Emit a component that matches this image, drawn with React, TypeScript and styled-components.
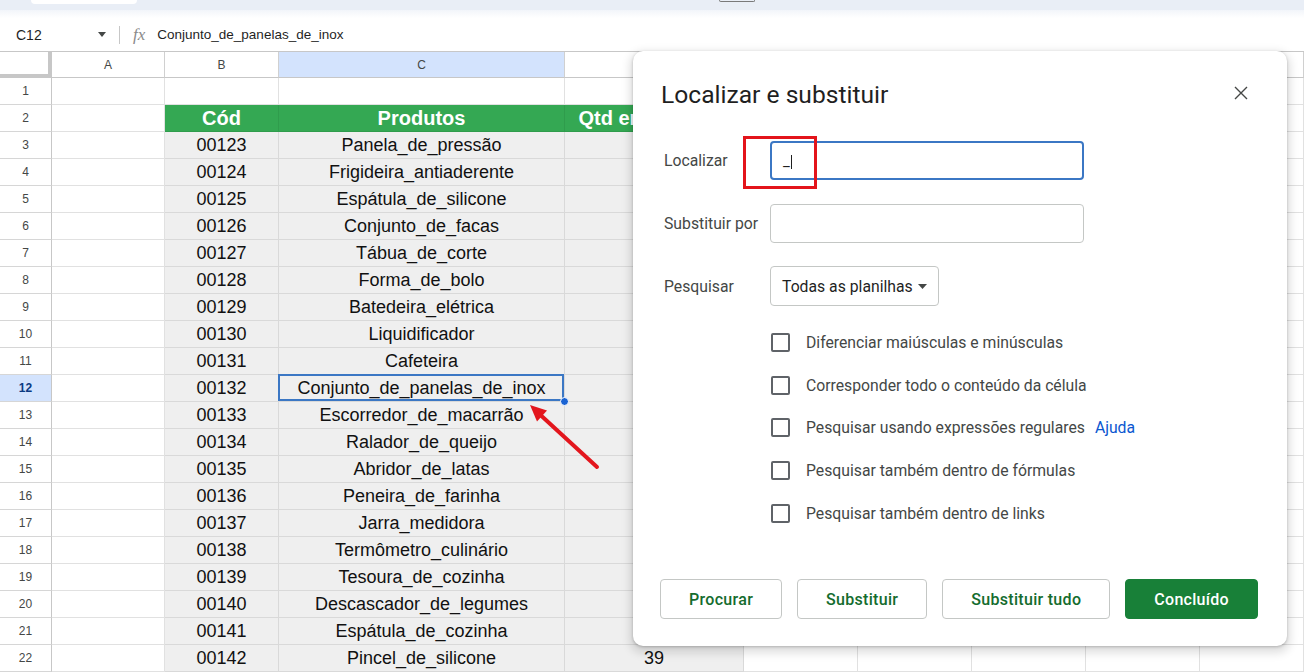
import React from 'react';
import styled, { createGlobalStyle, css } from 'styled-components';

// dados da planilha
const produtos: [string, string, number][] = [
  ['00123', 'Panela_de_pressão', 15],
  ['00124', 'Frigideira_antiaderente', 32],
  ['00125', 'Espátula_de_silicone', 58],
  ['00126', 'Conjunto_de_facas', 12],
  ['00127', 'Tábua_de_corte', 44],
  ['00128', 'Forma_de_bolo', 27],
  ['00129', 'Batedeira_elétrica', 9],
  ['00130', 'Liquidificador', 18],
  ['00131', 'Cafeteira', 21],
  ['00132', 'Conjunto_de_panelas_de_inox', 7],
  ['00133', 'Escorredor_de_macarrão', 36],
  ['00134', 'Ralador_de_queijo', 50],
  ['00135', 'Abridor_de_latas', 63],
  ['00136', 'Peneira_de_farinha', 41],
  ['00137', 'Jarra_medidora', 29],
  ['00138', 'Termômetro_culinário', 14],
  ['00139', 'Tesoura_de_cozinha', 33],
  ['00140', 'Descascador_de_legumes', 48],
  ['00141', 'Espátula_de_cozinha', 26],
  ['00142', 'Pincel_de_silicone', 39],
];

const columns = ['A', 'B', 'C', 'D', 'E', 'F', 'G', 'H', 'I'];
const colWidths = [113, 114, 286, 179, 114, 114, 114, 114, 104];
const headers = ['Cód', 'Produtos', 'Qtd em estoque'];

const opcoes = [
  'Diferenciar maiúsculas e minúsculas',
  'Corresponder todo o conteúdo da célula',
  'Pesquisar usando expressões regulares',
  'Pesquisar também dentro de fórmulas',
  'Pesquisar também dentro de links',
];

type CellKind = 'blank' | 'head' | 'data';

const cellFor = (row: number, col: number): { kind: CellKind; text: string } => {
  if (col < 1 || col > 3 || row < 2) return { kind: 'blank', text: '' };
  if (row === 2) return { kind: 'head', text: headers[col - 1] };
  const p = produtos[row - 3];
  return { kind: 'data', text: String(p[col - 1]) };
};

const App: React.FC = () => {
  const rows = Array.from({ length: 22 }, (_, i) => i + 1);

  return (
    <Page>
      <GlobalStyle />
      <TopStrip>
        <TabStub />
        <TinyButton />
      </TopStrip>
      <Fade />

      <FormulaBar>
        <NameBox>
          <span>C12</span>
          <svg width="8" height="5" viewBox="0 0 8 5">
            <path d="M0 0h8L4 5z" fill="#444746" />
          </svg>
        </NameBox>
        <Divider />
        <FxIcon>fx</FxIcon>
        <FormulaText>Conjunto_de_panelas_de_inox</FormulaText>
      </FormulaBar>

      <Grid>
        <CornerCell />
        {columns.map((c) => (
          <ColHeader key={c} $active={c === 'C'}>{c}</ColHeader>
        ))}
        {rows.map((r) => (
          <React.Fragment key={r}>
            <RowHeader $active={r === 12}>{r}</RowHeader>
            {columns.map((c, ci) => {
              const cell = cellFor(r, ci);
              const selected = r === 12 && c === 'C';
              return (
                <Cell key={c} $kind={cell.kind} $selected={selected}>
                  {cell.text}
                  {selected && <FillHandle />}
                </Cell>
              );
            })}
          </React.Fragment>
        ))}
      </Grid>

      <Arrow width="90" height="80" viewBox="0 0 90 80">
        <line x1="77" y1="72" x2="21" y2="20.5" stroke="#e3161d" strokeWidth="4" strokeLinecap="round" />
        <path d="M10 10L27 15.5L17 26.5z" fill="#e3161d" />
      </Arrow>

      <Dialog>
        <DialogHeader>
          <Title>Localizar e substituir</Title>
          <CloseButton aria-label="Fechar">
            <svg width="14" height="14" viewBox="0 0 14 14">
              <path d="M1 1l12 12M13 1L1 13" stroke="#444746" strokeWidth="1.4" />
            </svg>
          </CloseButton>
        </DialogHeader>

        <FieldGrid>
          <FieldLabel>Localizar</FieldLabel>
          <TextField $focused>
            _<TextCaret />
          </TextField>
          <FieldLabel>Substituir por</FieldLabel>
          <TextField />
          <FieldLabel>Pesquisar</FieldLabel>
          <SelectBox>
            Todas as planilhas
            <svg width="9" height="5" viewBox="0 0 9 5">
              <path d="M0 0h9L4.5 5z" fill="#444746" />
            </svg>
          </SelectBox>
        </FieldGrid>

        <OptionList>
          {opcoes.map((o, i) => (
            <OptionRow key={o}>
              <CheckBox />
              <OptionText>{o}</OptionText>
              {i === 2 && <HelpLink>Ajuda</HelpLink>}
            </OptionRow>
          ))}
        </OptionList>

        <Footer>
          <Button>Procurar</Button>
          <Button>Substituir</Button>
          <Button>Substituir tudo</Button>
          <Button $primary>Concluído</Button>
        </Footer>
      </Dialog>

      <Highlight />
    </Page>
  );
};

export default App;

const GlobalStyle = createGlobalStyle`
  html, body {
    margin: 0;
    padding: 0;
    background: #ffffff;
  }
  body {
    overflow: hidden;
    font-family: 'Liberation Sans', Arial, sans-serif;
  }
  * {
    box-sizing: border-box;
  }
`;

const dialogFont = `Roboto, 'Noto Sans', sans-serif`;

// página
const Page = styled.div`
  position: relative;
  width: 1304px;
  height: 672px;
  overflow: hidden;
  background: #ffffff;
`;

// faixa superior do navegador
const TopStrip = styled.div`
  display: flex;
  align-items: flex-start;
  height: 10px;
  background: #e9eef6;
`;

const TabStub = styled.div`
  margin-left: 31px;
  width: 106px;
  height: 4px;
  background: #ffffff;
  border-radius: 0 0 10px 10px;
`;

const TinyButton = styled.div`
  margin-left: 582px;
  width: 36px;
  height: 2px;
  border: 1px solid #7a7a7a;
  border-top: none;
  border-radius: 0 0 3px 3px;
`;

const Fade = styled.div`
  height: 8px;
  background: linear-gradient(#f2f5fa, #ffffff);
`;

// barra de fórmulas
const FormulaBar = styled.div`
  display: flex;
  align-items: center;
  height: 34px;
  border-bottom: 1px solid #c7c7c7;
  color: #1f1f1f;
  font-size: 13.5px;
`;

const NameBox = styled.div`
  display: flex;
  align-items: center;
  justify-content: space-between;
  width: 112px;
  padding: 0 6px 0 16px;
  font-size: 14px;
`;

const Divider = styled.div`
  width: 1px;
  height: 18px;
  margin-left: 7px;
  background: #c7c7c7;
`;

const FxIcon = styled.span`
  margin-left: 13px;
  font-family: 'Liberation Serif', serif;
  font-style: italic;
  font-size: 17px;
  color: #8a8a8a;
`;

const FormulaText = styled.span`
  margin-left: 12px;
`;

// grade da planilha
const Grid = styled.div`
  display: grid;
  grid-template-columns: 52px ${colWidths.map((w) => `${w}px`).join(' ')};
  grid-template-rows: 26px;
  grid-auto-rows: 27px;
`;

const CornerCell = styled.div`
  border-right: 4px solid #c7c7c7;
  border-bottom: 4px solid #c7c7c7;
`;

const ColHeader = styled.div<{ $active?: boolean }>`
  display: flex;
  align-items: center;
  justify-content: center;
  border-right: 1px solid #d0d0d0;
  border-bottom: 1px solid #c7c7c7;
  font-size: 12px;
  color: #444746;
  background: ${(p) => (p.$active ? '#d3e3fd' : '#ffffff')};
`;

const RowHeader = styled.div<{ $active?: boolean }>`
  display: flex;
  align-items: center;
  justify-content: center;
  border-right: 1px solid #c7c7c7;
  border-bottom: 1px solid #d6d6d6;
  font-size: 12px;
  color: ${(p) => (p.$active ? '#0b3a82' : '#444746')};
  font-weight: ${(p) => (p.$active ? 700 : 400)};
  background: ${(p) => (p.$active ? '#d3e3fd' : '#ffffff')};
`;

const kindStyles = {
  blank: css`
    background: #ffffff;
  `,
  head: css`
    background: #34a853;
    color: #ffffff;
    font-weight: 700;
    font-size: 20px;
    border-color: #2f9c4c;
  `,
  data: css`
    background: #efefef;
    color: #111111;
    font-size: 18px;
    border-color: #d9d9d9;
  `,
};

const Cell = styled.div<{ $kind: CellKind; $selected?: boolean }>`
  position: relative;
  display: flex;
  align-items: center;
  justify-content: center;
  white-space: nowrap;
  border-right: 1px solid #e1e1e1;
  border-bottom: 1px solid #e1e1e1;
  ${(p) => kindStyles[p.$kind]}
  ${(p) =>
    p.$selected &&
    css`
      &::after {
        content: '';
        position: absolute;
        inset: -1px 0 0 -1px;
        border: 2px solid #3b77c4;
        pointer-events: none;
      }
    `}
`;

const FillHandle = styled.span`
  position: absolute;
  right: -5px;
  bottom: -5px;
  width: 9px;
  height: 9px;
  border-radius: 50%;
  background: #1a63d3;
  border: 1px solid #ffffff;
  z-index: 2;
`;

// seta vermelha de anotação
const Arrow = styled.svg`
  position: absolute;
  left: 520px;
  top: 395px;
`;

// destaque vermelho no campo Localizar
const Highlight = styled.div`
  position: absolute;
  left: 743px;
  top: 136px;
  width: 74px;
  height: 53px;
  border: 3px solid #e3141b;
`;

// modal Localizar e substituir
const Dialog = styled.div`
  position: absolute;
  left: 633px;
  top: 51px;
  width: 654px;
  height: 595px;
  display: flex;
  flex-direction: column;
  padding: 28px 29px 27px 28px;
  background: #ffffff;
  border-radius: 10px;
  box-shadow: 0 4px 10px 3px rgba(0, 0, 0, 0.13), 0 1px 3px rgba(0, 0, 0, 0.22);
  font-family: ${dialogFont};
  color: #444746;
`;

const DialogHeader = styled.div`
  display: flex;
  align-items: center;
  justify-content: space-between;
  height: 32px;
`;

const Title = styled.h2`
  margin: 0;
  font-size: 24.6px;
  font-weight: 400;
  line-height: 32px;
  color: #1f1f1f;
`;

const CloseButton = styled.button`
  display: flex;
  align-items: center;
  justify-content: center;
  width: 40px;
  height: 40px;
  margin: -6px -3px -2px 0;
  padding: 0;
  border: none;
  background: none;
`;

const FieldGrid = styled.div`
  display: grid;
  grid-template-columns: 109px 314px;
  row-gap: 23.5px;
  align-items: center;
  margin-top: 30px;
`;

const FieldLabel = styled.label`
  padding-left: 3px;
  font-size: 15.75px;
  color: #444746;
`;

const TextField = styled.div<{ $focused?: boolean }>`
  display: flex;
  align-items: center;
  height: 39px;
  padding: 0 12px;
  border: 1px solid #c4c7c5;
  border-radius: 4px;
  font-size: 15px;
  color: #1f1f1f;
  ${(p) =>
    p.$focused &&
    css`
      border: 2px solid #3b77c4;
      padding: 0 11px;
    `}
`;

const TextCaret = styled.span`
  display: inline-block;
  width: 1px;
  height: 14px;
  margin: 2px 0 0 1px;
  background: #1f1f1f;
`;

const SelectBox = styled.div`
  display: flex;
  align-items: center;
  justify-content: space-between;
  justify-self: start;
  width: 169px;
  height: 40px;
  padding: 0 11px 0 11px;
  border: 1px solid #c4c7c5;
  border-radius: 4px;
  font-size: 15.75px;
  color: #1f1f1f;
  white-space: nowrap;
`;

const OptionList = styled.div`
  display: flex;
  flex-direction: column;
  margin-top: 15px;
  padding-left: 110px;
`;

const OptionRow = styled.div`
  display: flex;
  align-items: center;
  height: 42.75px;
`;

const CheckBox = styled.span`
  width: 19px;
  height: 19px;
  margin-right: 16px;
  border: 2px solid #5f6368;
  border-radius: 2px;
`;

const OptionText = styled.span`
  font-size: 15.75px;
  color: #444746;
`;

const HelpLink = styled.a`
  margin-left: 10px;
  font-size: 15.75px;
  color: #0b57d0;
  text-decoration: none;
`;

const Footer = styled.div`
  display: flex;
  justify-content: flex-end;
  gap: 15px;
  margin-top: auto;
`;

const Button = styled.button<{ $primary?: boolean }>`
  flex-shrink: 0;
  height: 40px;
  padding: 0 28px;
  border: 1px solid #c4c7c5;
  border-radius: 4px;
  background: #ffffff;
  color: #146c2e;
  font-family: ${dialogFont};
  font-size: 16px;
  font-weight: 500;
  letter-spacing: 0.3px;
  white-space: nowrap;
  ${(p) =>
    p.$primary &&
    css`
      background: #188038;
      border-color: #188038;
      color: #ffffff;
    `}
`;
